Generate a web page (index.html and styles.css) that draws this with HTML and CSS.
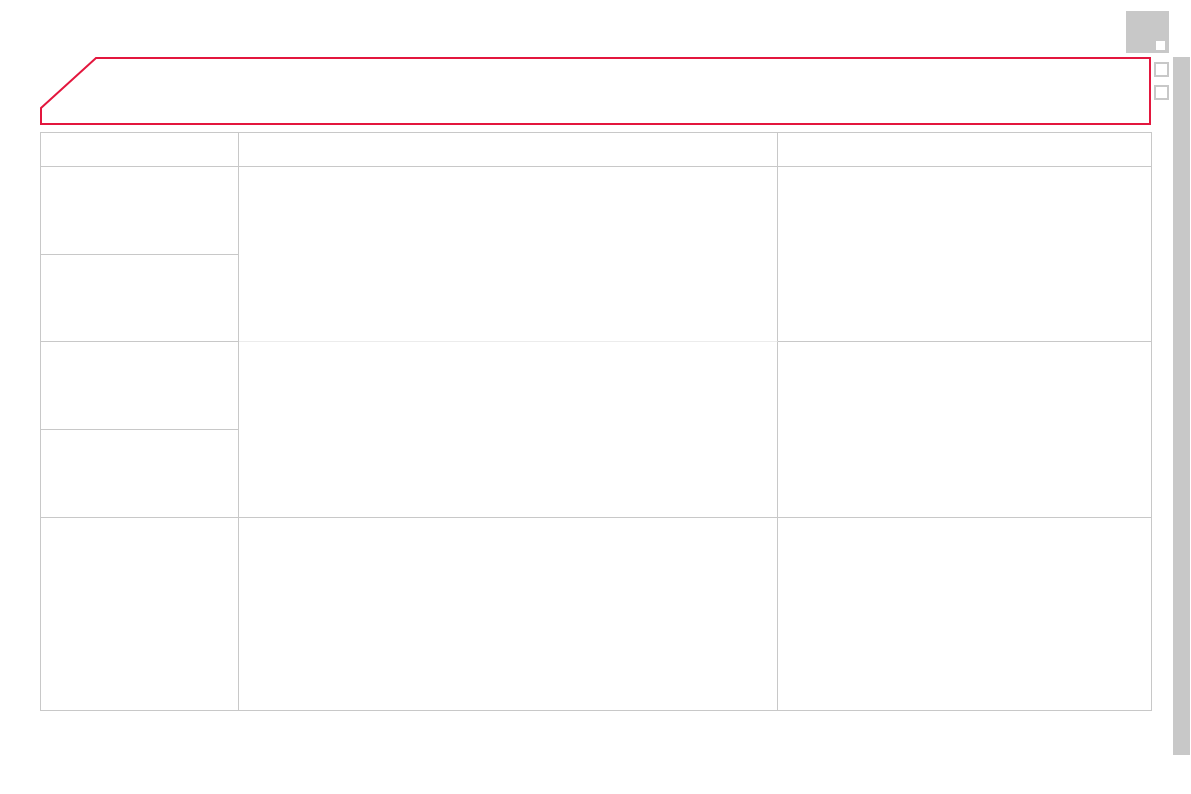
FILE: index.html
```html
<!DOCTYPE html>
<html>
<head>
<meta charset="utf-8">
<link rel="stylesheet" href="styles.css">
</head>
<body>
<div class="page">
  <div class="topstrip">
    <div class="tab"><span class="tab-dot"></span></div>
  </div>
  <div class="main">
    <div class="content">
      <div class="banner">
        <svg width="1111" height="68" viewBox="0 0 1111 68">
          <polygon points="1,51 56,1 1110,1 1110,67 1,67" fill="none" stroke="#e3173e" stroke-width="2"/>
        </svg>
      </div>
      <div class="grid">
        <div class="cell c1 head"></div>
        <div class="cell c2 head"></div>
        <div class="cell c3 head"></div>

        <div class="cell c1 r88"></div>
        <div class="cell c2 span2 light"></div>
        <div class="cell c3 span2"></div>
        <div class="cell c1 r87"></div>

        <div class="cell c1 r88"></div>
        <div class="cell c2 span2"></div>
        <div class="cell c3 span2"></div>
        <div class="cell c1 r88"></div>

        <div class="cell c1 big"></div>
        <div class="cell c2 big"></div>
        <div class="cell c3 big"></div>
      </div>
    </div>
    <div class="squares">
      <span class="sq"></span>
      <span class="sq"></span>
    </div>
    <div class="bar"></div>
  </div>
</div>
</body>
</html>
```

FILE: styles.css
```css
html, body {
  margin: 0;
  padding: 0;
  background: #ffffff;
  font-family: "Liberation Sans", Arial, sans-serif;
}

.page {
  width: 1191px;
  height: 794px;
  overflow: hidden;
}

.topstrip {
  height: 57px;
  display: flex;
  justify-content: flex-end;
  align-items: flex-start;
}

.tab {
  margin-top: 11px;
  margin-right: 22px;
  width: 43px;
  height: 42px;
  background: #c8c8c8;
  display: flex;
  justify-content: flex-end;
  align-items: flex-end;
  padding: 0 4px 3px 0;
  box-sizing: border-box;
}

.tab-dot {
  width: 9px;
  height: 9px;
  background: #ffffff;
}

.main {
  display: flex;
  align-items: flex-start;
}

.content {
  margin-left: 40px;
  width: 1112px;
}

.banner {
  height: 68px;
}

.banner svg {
  display: block;
}

.grid {
  margin-top: 7px;
  display: grid;
  grid-template-columns: 198px 539px 374px;
  grid-template-rows: 34px 88px 87px 88px 88px 193px;
  border-left: 1px solid #c8c8c8;
  border-top: 1px solid #c8c8c8;
  width: 1112px;
  box-sizing: border-box;
}

.cell {
  box-sizing: border-box;
  border-right: 1px solid #c8c8c8;
  border-bottom: 1px solid #c8c8c8;
}

.c1 { grid-column: 1; }
.c2 { grid-column: 2; }
.c3 { grid-column: 3; }
.span2 { grid-row: span 2; }
.light { border-bottom-color: #ececec; }

.squares {
  margin-left: 2px;
  margin-top: 5px;
  display: flex;
  flex-direction: column;
  gap: 8px;
}

.sq {
  display: block;
  width: 15px;
  height: 15px;
  border: 2px solid #c8c8c8;
  box-sizing: border-box;
}

.bar {
  margin-left: 4px;
  width: 17px;
  height: 698px;
  background: #c8c8c8;
}
```
